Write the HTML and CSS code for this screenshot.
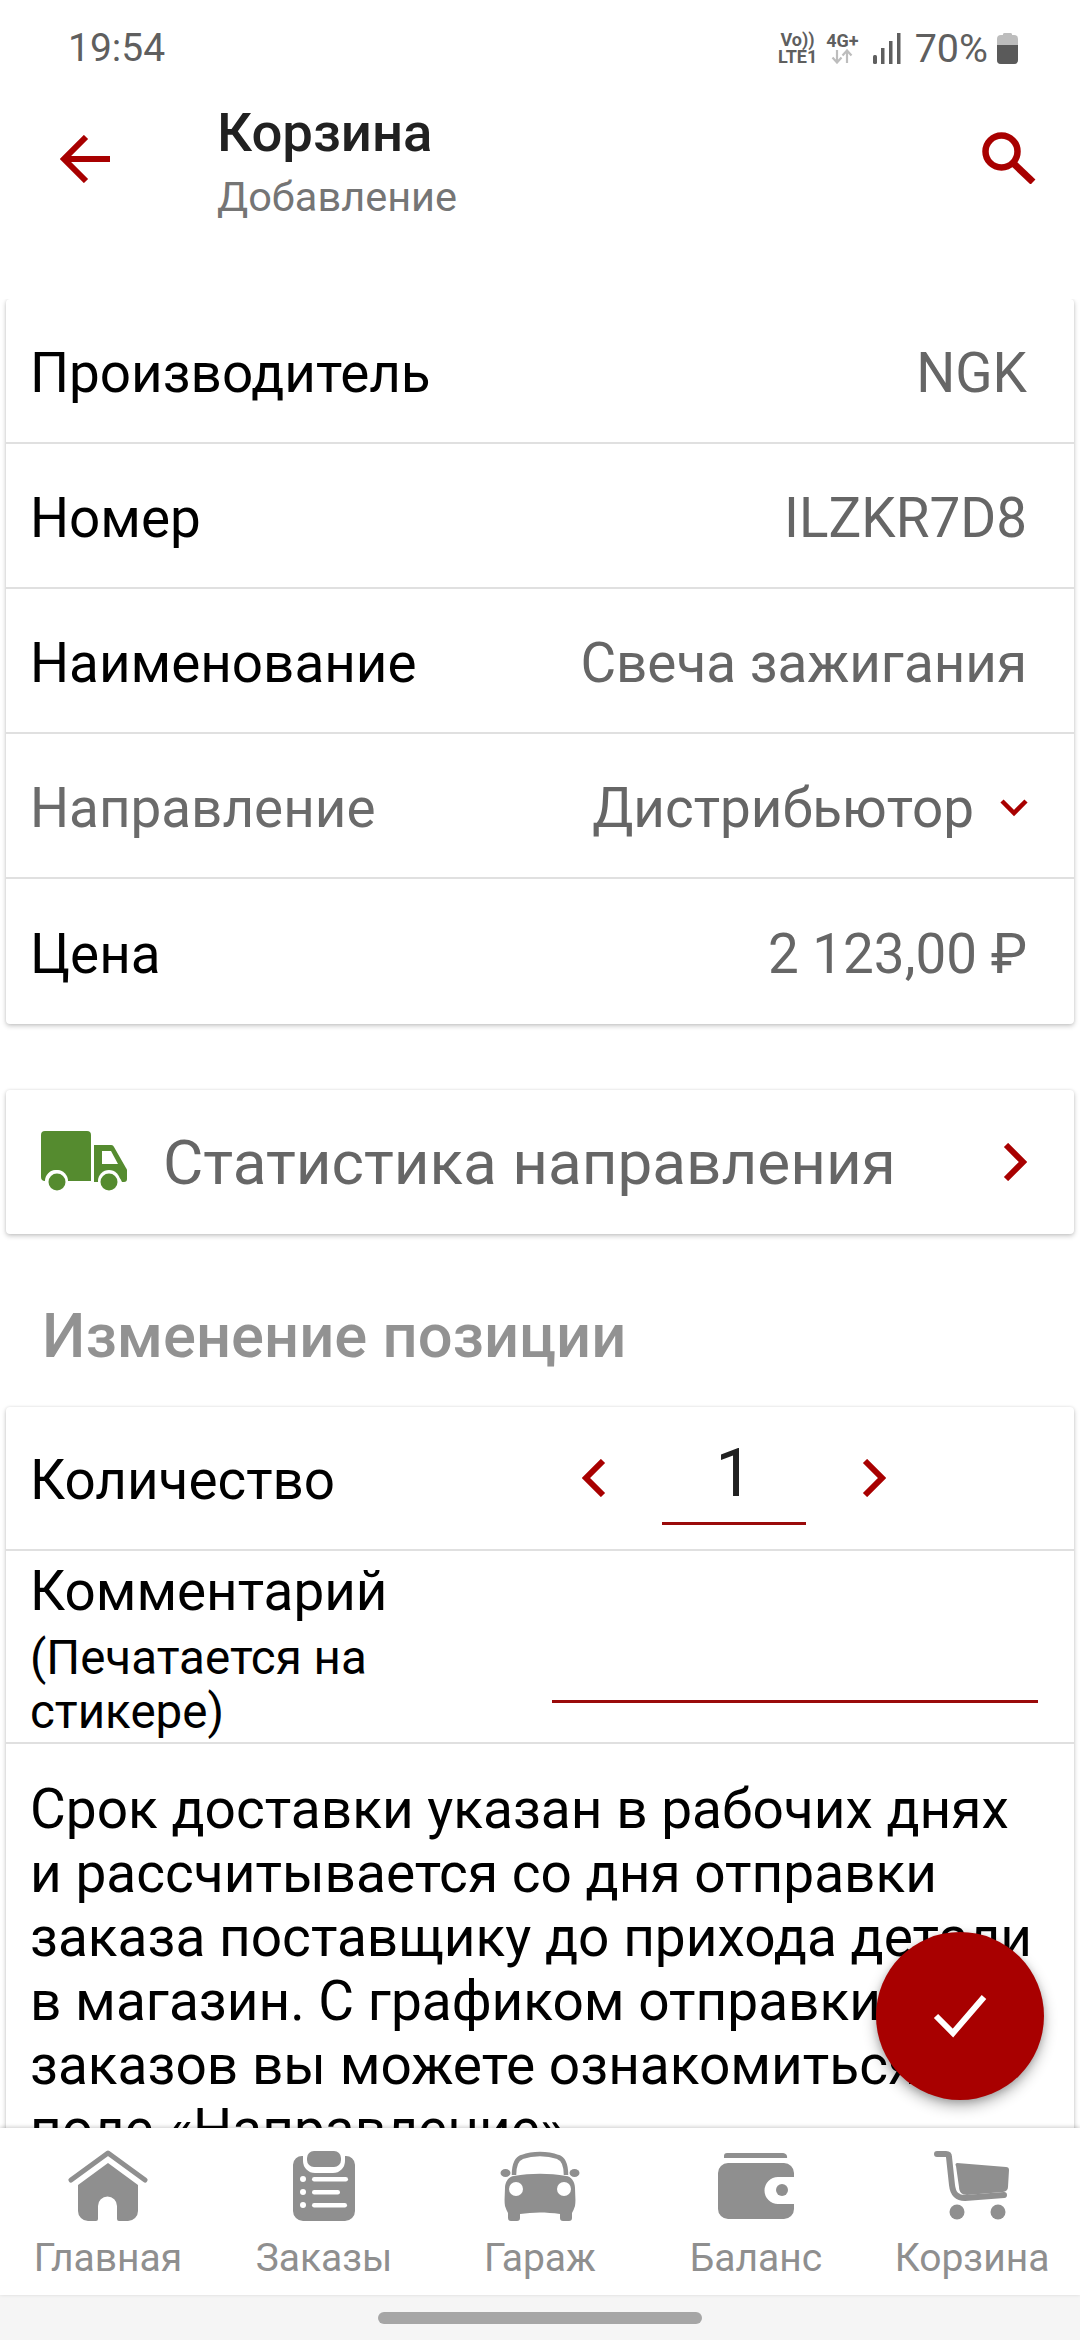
FILE: index.html
```html
<!DOCTYPE html>
<html lang="ru">
<head>
<meta charset="utf-8">
<title>Корзина</title>
<link rel="stylesheet" href="styles.css">
</head>
<body>
<div class="screen">
  <div class="status">
    <span class="time">19:54</span>
    <div class="status-right">
      <div class="net"><span>Vo))</span><span>LTE1</span></div>
      <div class="net g4"><span>4G+</span>
        <svg width="24" height="15" viewBox="0 0 24 15"><path d="M7 1v12M2.500 8.500 7 13.500l4.500-5M17 14V2M12.500 6.500 17 1.500l4.500 5" fill="none" stroke="#bdbdbd" stroke-width="2.200"/></svg>
      </div>
      <svg class="signal" width="28" height="31" viewBox="0 0 28 31"><rect x="0" y="22" width="4" height="9" rx="1.500" fill="#5f5f5f"/><rect x="8" y="15" width="3.500" height="16" fill="#5f5f5f"/><rect x="16" y="8" width="3.500" height="23" fill="#5f5f5f"/><rect x="24" y="0" width="3.500" height="31" fill="#5f5f5f"/></svg>
      <span class="pct">70%</span>
      <svg class="batt" width="21" height="32" viewBox="0 0 21 32"><path d="M6 3a1.500 1.500 0 0 1 1.500-2h6A1.500 1.500 0 0 1 15 3h2a4 4 0 0 1 4 4v21a4 4 0 0 1-4 4H4a4 4 0 0 1-4-4V7a4 4 0 0 1 4-4z" fill="#bdbdbd"/><path d="M0 13h21v15a4 4 0 0 1-4 4H4a4 4 0 0 1-4-4z" fill="#5a5a5a"/></svg>
    </div>
  </div>

  <header class="appbar">
    <svg class="back" width="50" height="48" viewBox="0 0 50 48"><path d="M50 24H5M26 2 4 24l22 22" fill="none" stroke="#a80000" stroke-width="6"/></svg>
    <div class="titles">
      <div class="title">Корзина</div>
      <div class="subtitle">Добавление</div>
    </div>
    <svg class="search" width="54" height="52" viewBox="0 0 54 52"><circle cx="19.500" cy="19.500" r="16" fill="none" stroke="#a80000" stroke-width="6.500"/><path d="M31 31l20 19" fill="none" stroke="#a80000" stroke-width="7"/></svg>
  </header>

  <main class="content">
    <section class="card">
      <div class="row"><span class="label">Производитель</span><span class="value">NGK</span></div>
      <div class="row"><span class="label">Номер</span><span class="value">ILZKR7D8</span></div>
      <div class="row"><span class="label">Наименование</span><span class="value">Свеча зажигания</span></div>
      <div class="row"><span class="label muted">Направление</span>
        <span class="value with-caret">Дистрибьютор
          <svg class="caret" width="28" height="18" viewBox="0 0 28 18"><path d="M2 2l12 12L26 2" fill="none" stroke="#a80000" stroke-width="4.500"/></svg>
        </span></div>
      <div class="row"><span class="label">Цена</span><span class="value">2 123,00 ₽</span></div>
    </section>

    <section class="card stat">
      <svg class="truck" width="87" height="62" viewBox="0 0 87 62">
        <path d="M4 0h42a4 4 0 0 1 4 4v46H26a11 11 0 0 0-22 0 4 4 0 0 1-4-4V4a4 4 0 0 1 4-4z" fill="#558b2f"/>
        <path d="M53 14h17a3 3 0 0 1 3 2l12 21a4 4 0 0 1 1 2v9a3 3 0 0 1-3 3h-2a11 11 0 0 0-21 0h-7z" fill="#558b2f"/>
        <path d="M61 20h9l7 13H61z" fill="#fff"/>
        <circle cx="16" cy="50" r="11" fill="#fff"/><circle cx="16" cy="51" r="8.500" fill="#558b2f"/>
        <circle cx="68" cy="50" r="11" fill="#fff"/><circle cx="68" cy="51" r="8.500" fill="#558b2f"/>
      </svg>
      <span class="stat-text">Статистика направления</span>
      <svg class="chev" width="24" height="38" viewBox="0 0 24 38"><path d="M3 2l17 17L3 36" fill="none" stroke="#a80000" stroke-width="6"/></svg>
    </section>

    <h2 class="section-title">Изменение позиции</h2>

    <section class="card">
      <div class="row qty-row">
        <span class="label">Количество</span>
        <div class="qty">
          <svg width="24" height="38" viewBox="0 0 24 38"><path d="M21 2 4 19l17 17" fill="none" stroke="#a80000" stroke-width="6"/></svg>
          <div class="qty-input">1</div>
          <svg width="24" height="38" viewBox="0 0 24 38"><path d="M3 2l17 17L3 36" fill="none" stroke="#a80000" stroke-width="6"/></svg>
        </div>
      </div>
      <div class="row comment-row">
        <div class="comment-label">
          <div class="label">Комментарий</div>
          <div class="hint">(Печатается на стикере)</div>
        </div>
        <div class="comment-input"></div>
      </div>
      <div class="note">Срок доставки указан в рабочих днях и рассчитывается со дня отправки заказа поставщику до прихода детали в магазин. С графиком отправки заказов вы можете ознакомиться в поле «Направление»</div>
    </section>
  </main>

  <button class="fab" type="button" aria-label="Готово">
    <svg width="54" height="44" viewBox="0 0 54 44"><path d="M3 22l17 17L51 3" fill="none" stroke="#fff" stroke-width="6"/></svg>
  </button>

  <nav class="tabs">
    <div class="tab">
      <svg width="80" height="72" viewBox="0 0 80 72"><path d="M3 30 40 3l37 27" fill="none" stroke="#8f8f8f" stroke-width="5" stroke-linecap="round" stroke-linejoin="round"/><path d="M40 13l30 22v26a10 10 0 0 1-10 10H51a2 2 0 0 1-2-2V56a9.500 9.500 0 0 0-19 0v13a2 2 0 0 1-2 2h-8a10 10 0 0 1-10-10V35z" fill="#8f8f8f"/></svg>
      <span>Главная</span>
    </div>
    <div class="tab">
      <svg width="62" height="72" viewBox="0 0 62 72"><path d="M10 6v5a12 12 0 0 0 12 12h18a12 12 0 0 0 12-12V6a9 9 0 0 1 10 9v46a10 10 0 0 1-10 10H10A10 10 0 0 1 0 61V15a9 9 0 0 1 10-9z" fill="#8f8f8f"/><rect x="14" y="1" width="34" height="16" rx="7" fill="#8f8f8f"/><g fill="#fff"><circle cx="10" cy="29" r="3"/><circle cx="10" cy="42" r="3"/><circle cx="10" cy="55" r="3"/><rect x="19" y="27" width="36" height="4.500" rx="2.200"/><rect x="19" y="40" width="28" height="4.500" rx="2.200"/><rect x="19" y="53" width="35" height="4.500" rx="2.200"/></g></svg>
      <span>Заказы</span>
    </div>
    <div class="tab">
      <svg width="80" height="72" viewBox="0 0 80 72"><path d="M14 25c0-10 2-16 8-18 11-4 25-4 36 0 6 2 8 8 8 18" fill="none" stroke="#8f8f8f" stroke-width="4.500"/><ellipse cx="5.500" cy="23" rx="5" ry="4" fill="#8f8f8f"/><ellipse cx="74.500" cy="23" rx="5" ry="4" fill="#8f8f8f"/><path d="M14 26c17-3 35-3 52 0 5 0 9 6 9 12 0 6 1 12 0 18-1 3-2 5-3 7v5a3 3 0 0 1-3 3h-6a3 3 0 0 1-3-3v-4c-14-2-27-2-40 0v4a3 3 0 0 1-3 3h-6a3 3 0 0 1-3-3v-5c-1-2-2-4-3-7-1-6 0-12 0-18 0-6 4-12 9-12z" fill="#8f8f8f"/><circle cx="16" cy="39" r="7" fill="#fff"/><circle cx="64" cy="39" r="7" fill="#fff"/></svg>
      <span>Гараж</span>
    </div>
    <div class="tab">
      <svg width="76" height="72" viewBox="0 0 76 72"><path d="M6 8V6a3 3 0 0 1 3-3h56a4 4 0 0 1 4 5z" fill="#8f8f8f"/><path d="M10 13h56a10 10 0 0 1 10 10v4H60a13 13 0 0 0 0 27h16v5a10 10 0 0 1-10 10H10A10 10 0 0 1 0 59V23a10 10 0 0 1 10-10z" fill="#8f8f8f"/><circle cx="64" cy="40" r="6" fill="#8f8f8f"/></svg>
      <span>Баланс</span>
    </div>
    <div class="tab">
      <svg width="76" height="72" viewBox="0 0 76 72"><path d="M3 4h9c2 0 3 1 3 3l3 28c1 9 5 13 13 13l39-3" fill="none" stroke="#8f8f8f" stroke-width="6" stroke-linecap="round"/><path d="M23 13l49 4a3 3 0 0 1 3 3l-1 17a5 5 0 0 1-5 5l-36 3c-5 0-8-3-8-8l-3-21a2 2 0 0 1 1-3z" fill="#8f8f8f"/><circle cx="23" cy="62" r="7.500" fill="#8f8f8f"/><circle cx="64" cy="62" r="7.500" fill="#8f8f8f"/></svg>
      <span>Корзина</span>
    </div>
  </nav>

  <div class="gesture"><div class="pill"></div></div>
</div>
</body>
</html>
```
FILE: styles.css
```css
* { box-sizing: border-box; }
html, body { margin: 0; padding: 0; }
body { width: 1080px; height: 2340px; overflow: hidden; background: #fff; font-family: Roboto, "Noto Sans", sans-serif; }
svg { display: block; flex: none; }

.screen { position: relative; width: 1080px; height: 2340px; display: flex; flex-direction: column; background: #fff; }

.status { height: 96px; flex: none; display: flex; align-items: center; justify-content: space-between; padding: 0 62px 0 68px; color: #5f5f5f; }
.time { font-size: 39px; }
.status-right { display: flex; align-items: center; }
.net { display: flex; flex-direction: column; align-items: center; font-size: 18px; font-weight: 700; line-height: 17px; margin-right: 9px; color: #5f5f5f; }
.g4 { margin-right: 14px; }
.pct { font-size: 39.500px; margin: 0 9px 0 14px; }

.appbar { height: 203px; flex: none; display: flex; align-items: flex-start; padding: 0 44px 0 60px; }
.back { margin-top: 39px; }
.titles { margin-left: 107px; flex: 1; }
.title { font-size: 54.500px; font-weight: 500; color: #212121; line-height: 56px; margin-top: 8px; }
.subtitle { font-size: 41.500px; color: #757575; line-height: 44px; margin-top: 15px; }
.search { margin-top: 36px; }

.content { flex: 1; min-height: 0; overflow: hidden; padding: 0 6px; }
.card { background: #fff; border-radius: 4px; box-shadow: 0 2px 5px rgba(0,0,0,.22), 0 0 3px rgba(0,0,0,.08); }
.row { height: 145px; display: flex; align-items: center; justify-content: space-between; padding: 5px 47px 0 24px; border-bottom: 2px solid #e0e0e0; }
.card > .row:last-child { border-bottom: 0; }
.label { font-size: 54.800px; color: #000; }
.muted { color: #6b6b6b; }
.value { font-size: 54.800px; color: #666; }
.with-caret { display: flex; align-items: center; gap: 26px; margin-right: -1px; }

.stat { margin-top: 66px; height: 144px; display: flex; align-items: center; padding: 0 47px 0 35px; }
.stat-text { flex: 1; margin-left: 35px; font-size: 62px; color: #666; }

.section-title { margin: 70px 0 0 36px; height: 103px; font-size: 61.500px; font-weight: 500; color: #929292; line-height: 64px; }

.qty-row { height: 144px; padding: 0 49px 0 24px; }
.qty-row .label { padding-top: 4px; }
.qty { display: flex; align-items: center; margin-right: 139px; }
.qty-input { width: 144px; height: 94px; margin: 0 56px; padding-top: 10px; border-bottom: 3px solid #9a0a0a; font-size: 66px; line-height: 66px; text-align: center; color: #212121; }

.comment-row { height: 193px; align-items: flex-start; padding: 0 36px 0 24px; }
.comment-label { width: 400px; padding-top: 10px; }
.comment-label .label { line-height: 60px; }
.hint { font-size: 47.500px; line-height: 54px; color: #000; padding-top: 10px; }
.comment-input { width: 486px; height: 152px; border-bottom: 3px solid #9a0a0a; }

.note { padding: 33px 30px 0 24px; font-size: 55px; line-height: 64px; color: #000; }

.fab { position: absolute; left: 876px; top: 1932px; width: 168px; height: 168px; padding: 0; border: 0; border-radius: 50%; background: #a80000; display: flex; align-items: center; justify-content: center; box-shadow: 0 6px 14px rgba(0,0,0,.3), 0 2px 6px rgba(0,0,0,.15); }

.tabs { height: 167px; flex: none; display: flex; background: #fff; box-shadow: 0 -1px 4px rgba(0,0,0,.2); position: relative; }
.tab { flex: 1; display: flex; flex-direction: column; align-items: center; padding-top: 22px; color: #8f8f8f; font-size: 39px; }
.tab span { margin-top: 14px; line-height: 44px; }

.gesture { height: 45px; flex: none; background: #f5f5f5; display: flex; justify-content: center; padding-top: 17px; }
.pill { width: 324px; height: 12px; border-radius: 6px; background: #a6a6a6; }
```
